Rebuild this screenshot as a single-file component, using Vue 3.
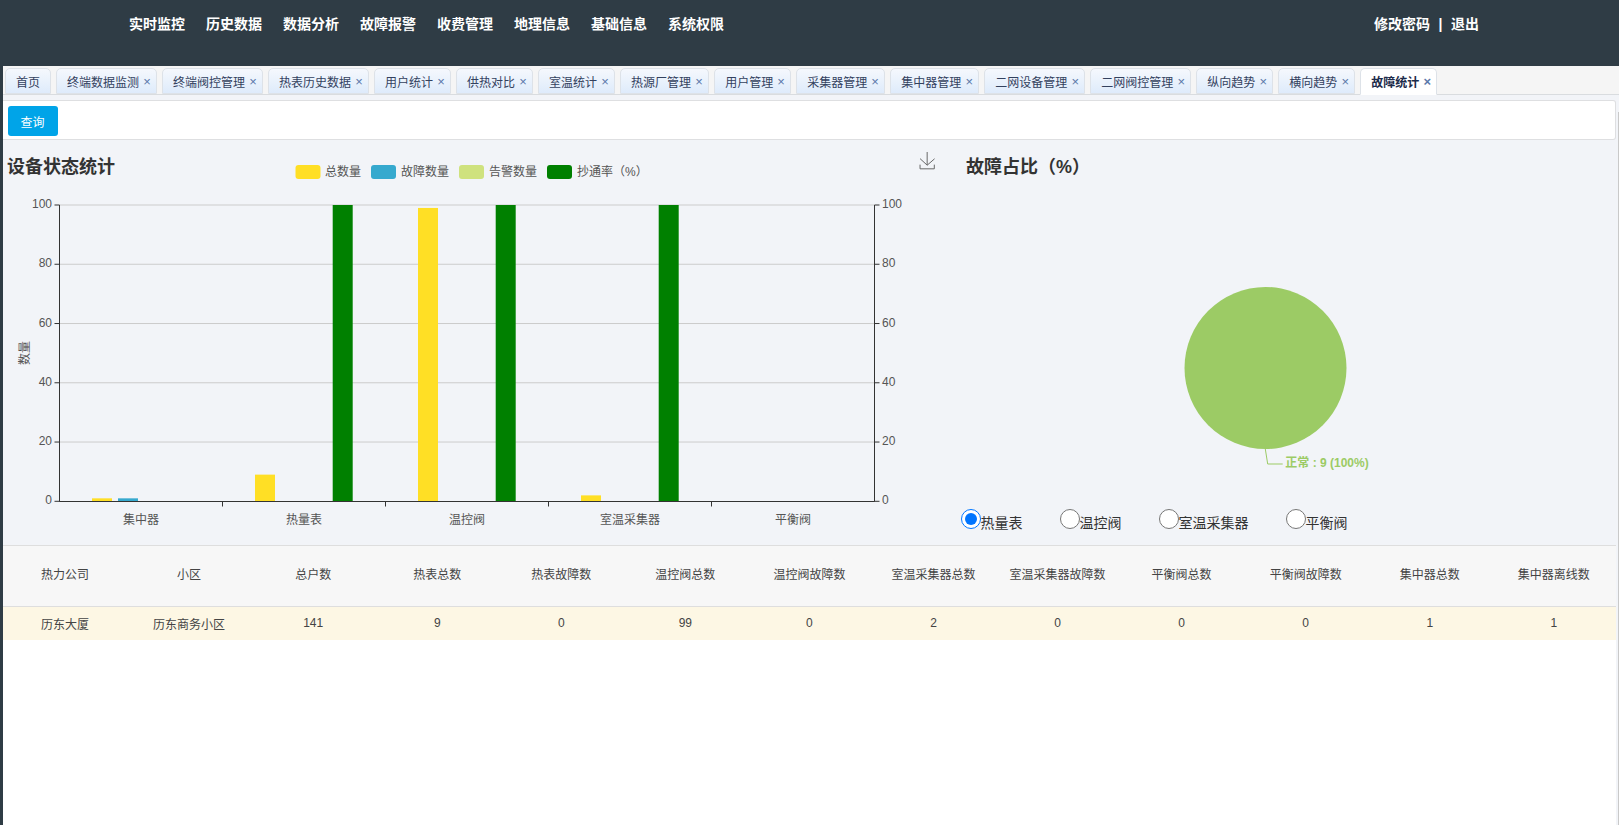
<script setup>
const nav = ['实时监控', '历史数据', '数据分析', '故障报警', '收费管理', '地理信息', '基础信息', '系统权限']
const tabs = ['终端数据监测', '终端阀控管理', '热表历史数据', '用户统计', '供热对比', '室温统计', '热源厂管理', '用户管理', '采集器管理', '集中器管理', '二网设备管理', '二网阀控管理', '纵向趋势', '横向趋势']
const legend = [
  { x: 295.5, tx: 325, color: '#ffdf25', name: '总数量' },
  { x: 371, tx: 401, color: '#36a9ce', name: '故障数量' },
  { x: 459, tx: 489, color: '#cfe27e', name: '告警数量' },
  { x: 547, tx: 577, color: '#008000', name: '抄通率（%）' }
]
const ticks = [0, 20, 40, 60, 80, 100]
const yOf = v => 501.3 - v * 2.963
const cats = ['集中器', '热量表', '温控阀', '室温采集器', '平衡阀']
const series = [
  { off: 32.5, color: '#ffdf25', vals: [1, 9, 99, 2, 0] },
  { off: 58.5, color: '#36a9ce', vals: [1, 0, 0, 0, 0] },
  { off: 110.2, color: '#008000', vals: [0, 100, 100, 100, 0] }
]
const bars = []
series.forEach(s => s.vals.forEach((v, i) => {
  if (v) bars.push({ x: 59.5 + i * 163 + s.off, y: yOf(v), h: v * 2.963, color: s.color })
}))
const radios = [
  { name: '热量表', checked: true },
  { name: '温控阀', checked: false },
  { name: '室温采集器', checked: false },
  { name: '平衡阀', checked: false }
]
const heads = ['热力公司', '小区', '总户数', '热表总数', '热表故障数', '温控阀总数', '温控阀故障数', '室温采集器总数', '室温采集器故障数', '平衡阀总数', '平衡阀故障数', '集中器总数', '集中器离线数']
const row = ['历东大厦', '历东商务小区', 141, 9, 0, 99, 0, 2, 0, 0, 0, 1, 1]
</script>

<template>
  <div class="page">
    <header class="topbar">
      <nav class="nav">
        <a v-for="n in nav" :key="n" class="nav-item">{{ n }}</a>
      </nav>
      <div class="user">
        <span>修改密码</span>
        <span class="sep">|</span>
        <span>退出</span>
      </div>
    </header>

    <main class="main">
      <div class="tabs">
        <div class="tab">首页</div>
        <div v-for="t in tabs" :key="t" class="tab">
          {{ t }}<span class="close">×</span>
        </div>
        <div class="tab active">故障统计<span class="close">×</span></div>
      </div>

      <div class="query">
        <button class="btn">查询</button>
      </div>

      <section class="charts">
        <div class="bar-col">
          <h3 class="title bar-title">设备状态统计</h3>
          <svg class="bar-svg" width="952" height="405" viewBox="3 140 952 405">
            <g v-for="l in legend" :key="l.name">
              <rect :x="l.x" y="165" width="25" height="14" rx="3" :fill="l.color" />
              <text :x="l.tx" y="175.5" class="axis-text">{{ l.name }}</text>
            </g>
            <g transform="translate(918.7 152) scale(.29)" fill="none" stroke="#666" stroke-width="3.4">
              <path d="M4.7,22.9L29.3,45.5L54.7,23.4M4.6,43.6L4.6,58L53.8,58L53.8,43.6M29.2,45.1L29.2,0" />
            </g>

            <line v-for="t in ticks.slice(1)" :key="'g' + t" x1="59.5" x2="874.5" :y1="yOf(t)" :y2="yOf(t)" stroke="#ccc" />
            <rect v-for="(b, i) in bars" :key="i" :x="b.x" :y="b.y" width="20" :height="b.h" :fill="b.color" />

            <line x1="59.5" x2="59.5" y1="205" y2="501.8" stroke="#333" />
            <line x1="874.5" x2="874.5" y1="205" y2="501.8" stroke="#333" />
            <line x1="59.5" x2="874.5" y1="501.5" y2="501.5" stroke="#333" />
            <g v-for="t in ticks" :key="t">
              <line x1="54.5" x2="59.5" :y1="yOf(t)" :y2="yOf(t)" stroke="#333" />
              <line x1="874.5" x2="879.5" :y1="yOf(t)" :y2="yOf(t)" stroke="#333" />
              <text x="52" :y="yOf(t) + 3" text-anchor="end" class="axis-text">{{ t }}</text>
              <text x="882" :y="yOf(t) + 3" class="axis-text">{{ t }}</text>
            </g>
            <line v-for="i in 4" :key="'x' + i" :x1="59.5 + i * 163" :x2="59.5 + i * 163" y1="501.5" y2="506.5" stroke="#333" />
            <text v-for="(c, i) in cats" :key="c" :x="141 + i * 163" y="524" text-anchor="middle" class="axis-text">{{ c }}</text>
            <text transform="translate(29 353) rotate(-90)" text-anchor="middle" class="axis-text">数量</text>
          </svg>
        </div>

        <div class="pie-col">
          <h3 class="title pie-title">故障占比（%）</h3>
          <svg class="pie-svg" width="661" height="330" viewBox="955 179 661 330">
            <circle cx="1265.5" cy="368" r="81" fill="#9ccb65" />
            <path d="M1265.3 449L1267.7 464H1282.7" fill="none" stroke="#9ccb65" />
            <text x="1285.3" y="467" class="pie-label">正常 : 9 (100%)</text>
          </svg>
          <div class="radios">
            <label v-for="r in radios" :key="r.name" class="radio">
              <input type="radio" name="dev" :checked="r.checked" />
              <span>{{ r.name }}</span>
            </label>
          </div>
        </div>
      </section>

      <section class="table-wrap">
        <table class="table">
          <thead>
            <tr><th v-for="h in heads" :key="h">{{ h }}</th></tr>
          </thead>
          <tbody>
            <tr><td v-for="(c, i) in row" :key="i">{{ c }}</td></tr>
          </tbody>
        </table>
      </section>
      <i class="scroll-line"></i>
    </main>
  </div>
</template>

<style>
html, body { margin: 0; padding: 0; overflow: hidden; }
</style>

<style scoped>
.page {
  width: 1619px;
  height: 825px;
  display: flex;
  flex-direction: column;
  background: #2f3c45;
  font-family: "Liberation Sans", "Noto Sans CJK SC", sans-serif;
  font-size: 12px;
  color: #333;
  overflow: hidden;
}
.topbar {
  height: 66px;
  flex: none;
  display: flex;
  justify-content: space-between;
  align-items: flex-start;
  color: #fff;
  font-size: 14px;
  font-weight: 700;
  line-height: 48px;
}
.nav {
  display: flex;
  gap: 21px;
  margin-left: 129px;
}
.user {
  display: flex;
  margin-right: 140px;
}
.sep { margin: 0 8.5px; }
.main {
  flex: 1;
  min-height: 0;
  margin-left: 3px;
  padding-right: 3px;
  display: flex;
  flex-direction: column;
  background: #f2f4f8;
  position: relative;
}
.tabs {
  margin-right: -3px;
  height: 29px;
  box-sizing: border-box;
  flex: none;
  display: flex;
  align-items: flex-end;
  gap: 5px;
  padding-left: 2px;
  background: #f5f5f5;
  border-bottom: 1px solid #d9dcdf;
}
.tab {
  height: 26px;
  box-sizing: border-box;
  padding: 0 10px;
  display: flex;
  align-items: center;
  border: 1px solid #dde2e8;
  border-radius: 5px 5px 0 0;
  background: linear-gradient(#f5f8fd, #deebfb);
  color: #33415e;
  white-space: nowrap;
}
.tab .close {
  width: 8px;
  margin-left: 4px;
  margin-right: -5px;
  text-align: center;
  color: #5a78aa;
  font-size: 13px;
}
.tab.active {
  height: 27px;
  margin-bottom: -1px;
  padding-bottom: 1px;
  background: #fff;
  border-bottom-color: #fff;
  color: #1c2b4a;
  font-weight: 700;
}
.query {
  flex: none;
  height: 39.5px;
  margin-top: 5px;
  box-sizing: border-box;
  padding: 5px 4.5px;
  background: #fff;
  border: 1px solid #dedfe1;
  border-left: 0;
  border-radius: 0 3px 3px 0;
}
.btn {
  display: block;
  width: 50px;
  height: 30px;
  padding: 0;
  border: 0;
  border-radius: 3px;
  background: #00a4e8;
  color: #fff;
  font: inherit;
}
.charts {
  flex: none;
  display: flex;
  height: 405px;
}
.bar-col {
  position: relative;
  width: 952px;
  flex: none;
}
.bar-svg { display: block; }
.title {
  margin: 0;
  font-size: 18px;
  font-weight: 700;
  line-height: 24px;
  color: #333;
}
.bar-title {
  position: absolute;
  left: 4px;
  top: 15px;
}
.pie-col {
  flex: 1;
  display: flex;
  flex-direction: column;
}
.pie-title {
  padding: 15px 0 0 11px;
}
.pie-svg { display: block; flex: none; }
.axis-text {
  font-size: 12px;
  fill: #555;
}
.pie-label {
  font-size: 12px;
  font-weight: 700;
  fill: #9ccb65;
}
.radios {
  display: flex;
  gap: 37px;
  padding-left: 5.5px;
}
.radio {
  display: flex;
  align-items: flex-start;
  font-size: 14px;
  color: #333;
}
.radio input {
  width: 20px;
  height: 20px;
  margin: 0;
}
.radio span {
  margin-top: 4px;
  line-height: 20px;
}
.table-wrap {
  flex: 1;
  background: #fff;
  min-height: 0;
}
.table {
  width: 100%;
  table-layout: fixed;
  border-collapse: collapse;
  font-size: 12px;
  color: #444;
}
.table th {
  height: 61px;
  padding: 0 0 4px;
  box-sizing: border-box;
  background: #f7f7f7;
  border-top: 1px solid #dedede;
  border-bottom: 1px solid #dedede;
  font-weight: 400;
  text-align: center;
}
.table td {
  height: 33px;
  padding: 0;
  background: #fdf7e4;
  text-align: center;
}
.scroll-line {
  position: absolute;
  right: 0;
  top: 46px;
  bottom: 0;
  width: 1px;
  background: #c9c9c9;
}
</style>
